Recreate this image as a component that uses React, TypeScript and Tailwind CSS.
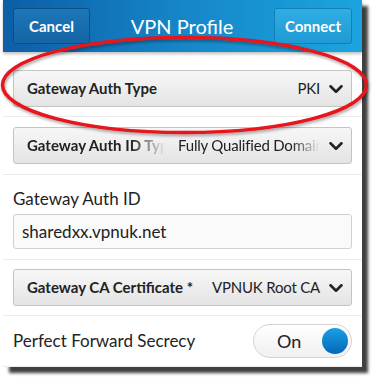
import { ChevronDown } from "lucide-react";

const font = { fontFamily: "Lato, 'Open Sans', sans-serif" };

function Select({ label, value, fade }: { label: string; value: string; fade?: boolean }) {
  return (
    <div className="h-[37px] rounded-[3px] border border-[#c4c4c4] bg-gradient-to-b from-[#f7f7f7] to-[#e4e4e4] flex items-center pl-[13px] pr-[4px] text-[#222]">
      <span
        className={
          fade
            ? "w-[138px] shrink-0 overflow-hidden whitespace-nowrap font-bold text-[15px] [mask-image:linear-gradient(to_right,black_75%,transparent)]"
            : "shrink-0 whitespace-nowrap font-bold text-[15px]"
        }
      >
        {label}
      </span>
      <span
        className={
          fade
            ? "ml-auto w-[142px] overflow-hidden whitespace-nowrap text-[15px] tracking-[-0.2px] [mask-image:linear-gradient(to_right,black_80%,transparent)]"
            : "ml-auto whitespace-nowrap text-[15px] tracking-[-0.2px]"
        }
      >
        {value}
      </span>
      <ChevronDown className="ml-[5px] w-[22px] h-[22px] text-[#222]" strokeWidth={2.8} />
    </div>
  );
}

export default function App() {
  return (
    <div className="relative w-[374px] h-[381px] bg-white overflow-hidden" style={font}>
      <div className="ml-[3px] w-[359px] h-[367px] bg-white flex flex-col shadow-[6px_6px_3px_rgba(0,0,0,0.75)]">
        {/* Title bar */}
        <div className="h-[52px] shrink-0 flex items-center justify-between px-[10px] bg-gradient-to-r from-[#0d5ea5] via-[#1686c9] to-[#1ba5de] shadow-[0_2px_3px_rgba(0,0,0,0.25)]">
          <button className="w-[77px] h-[36px] rounded-[3px] border border-[#0b4f86] bg-gradient-to-b from-[#1c77b8] to-[#1565a5] text-white font-bold text-[15px]">
            Cancel
          </button>
          <span className="text-white text-[20px]">VPN Profile</span>
          <button className="w-[78px] h-[36px] rounded-[3px] border border-[#137fb7] bg-gradient-to-b from-[#2eaee4] to-[#1f9ad4] text-white font-bold text-[15px]">
            Connect
          </button>
        </div>

        <div className="px-[10px] pt-[18px] pb-[9px] border-b border-[#ececec]">
          <Select label="Gateway Auth Type" value="PKI" />
        </div>
        <div className="px-[10px] pt-[10px] pb-[10px] border-b border-[#ececec]">
          <Select label="Gateway Auth ID Type" value="Fully Qualified Domain Name" fade />
        </div>
        <div className="px-[10px] pt-[13px] pb-[10px] border-b border-[#ececec]">
          <div className="text-[17px] leading-[22px] text-[#222]">Gateway Auth ID</div>
          <div className="mt-[4px] h-[35px] rounded-[3px] border border-[#d0d0d0] bg-[#fafafa] flex items-center px-[8px] text-[17px] text-[#222]">
            sharedxx.vpnuk.net
          </div>
        </div>
        <div className="px-[10px] pt-[9px] pb-[9px] border-b border-[#ececec]">
          <Select label="Gateway CA Certificate *" value="VPNUK Root CA" />
        </div>
        <div className="flex-1 px-[10px] flex items-center justify-between border-b border-[#ececec]">
          <span className="text-[17px] text-[#222]">Perfect Forward Secrecy</span>
          <div className="w-[99px] h-[34px] rounded-full border border-[#d4d4d4] bg-gradient-to-b from-white to-[#f0f0f0] flex items-center pl-[23px] pr-[3px]">
            <span className="text-[18px] text-[#222]">On</span>
            <span className="ml-auto w-[26px] h-[26px] rounded-full bg-gradient-to-b from-[#1aa0e6] to-[#0768b8]" />
          </div>
        </div>
      </div>

      {/* red annotation ellipse */}
      <svg className="absolute left-0 top-0" width="374" height="381" viewBox="0 0 374 381">
        <defs>
          <filter id="sh" x="-10%" y="-10%" width="120%" height="130%">
            <feDropShadow dx="1" dy="2" stdDeviation="1.5" floodColor="#000" floodOpacity="0.35" />
          </filter>
        </defs>
        <ellipse cx="184.5" cy="85" rx="182" ry="47.5" fill="none" stroke="#e5141b" strokeWidth="3.5" filter="url(#sh)" />
      </svg>
    </div>
  );
}
